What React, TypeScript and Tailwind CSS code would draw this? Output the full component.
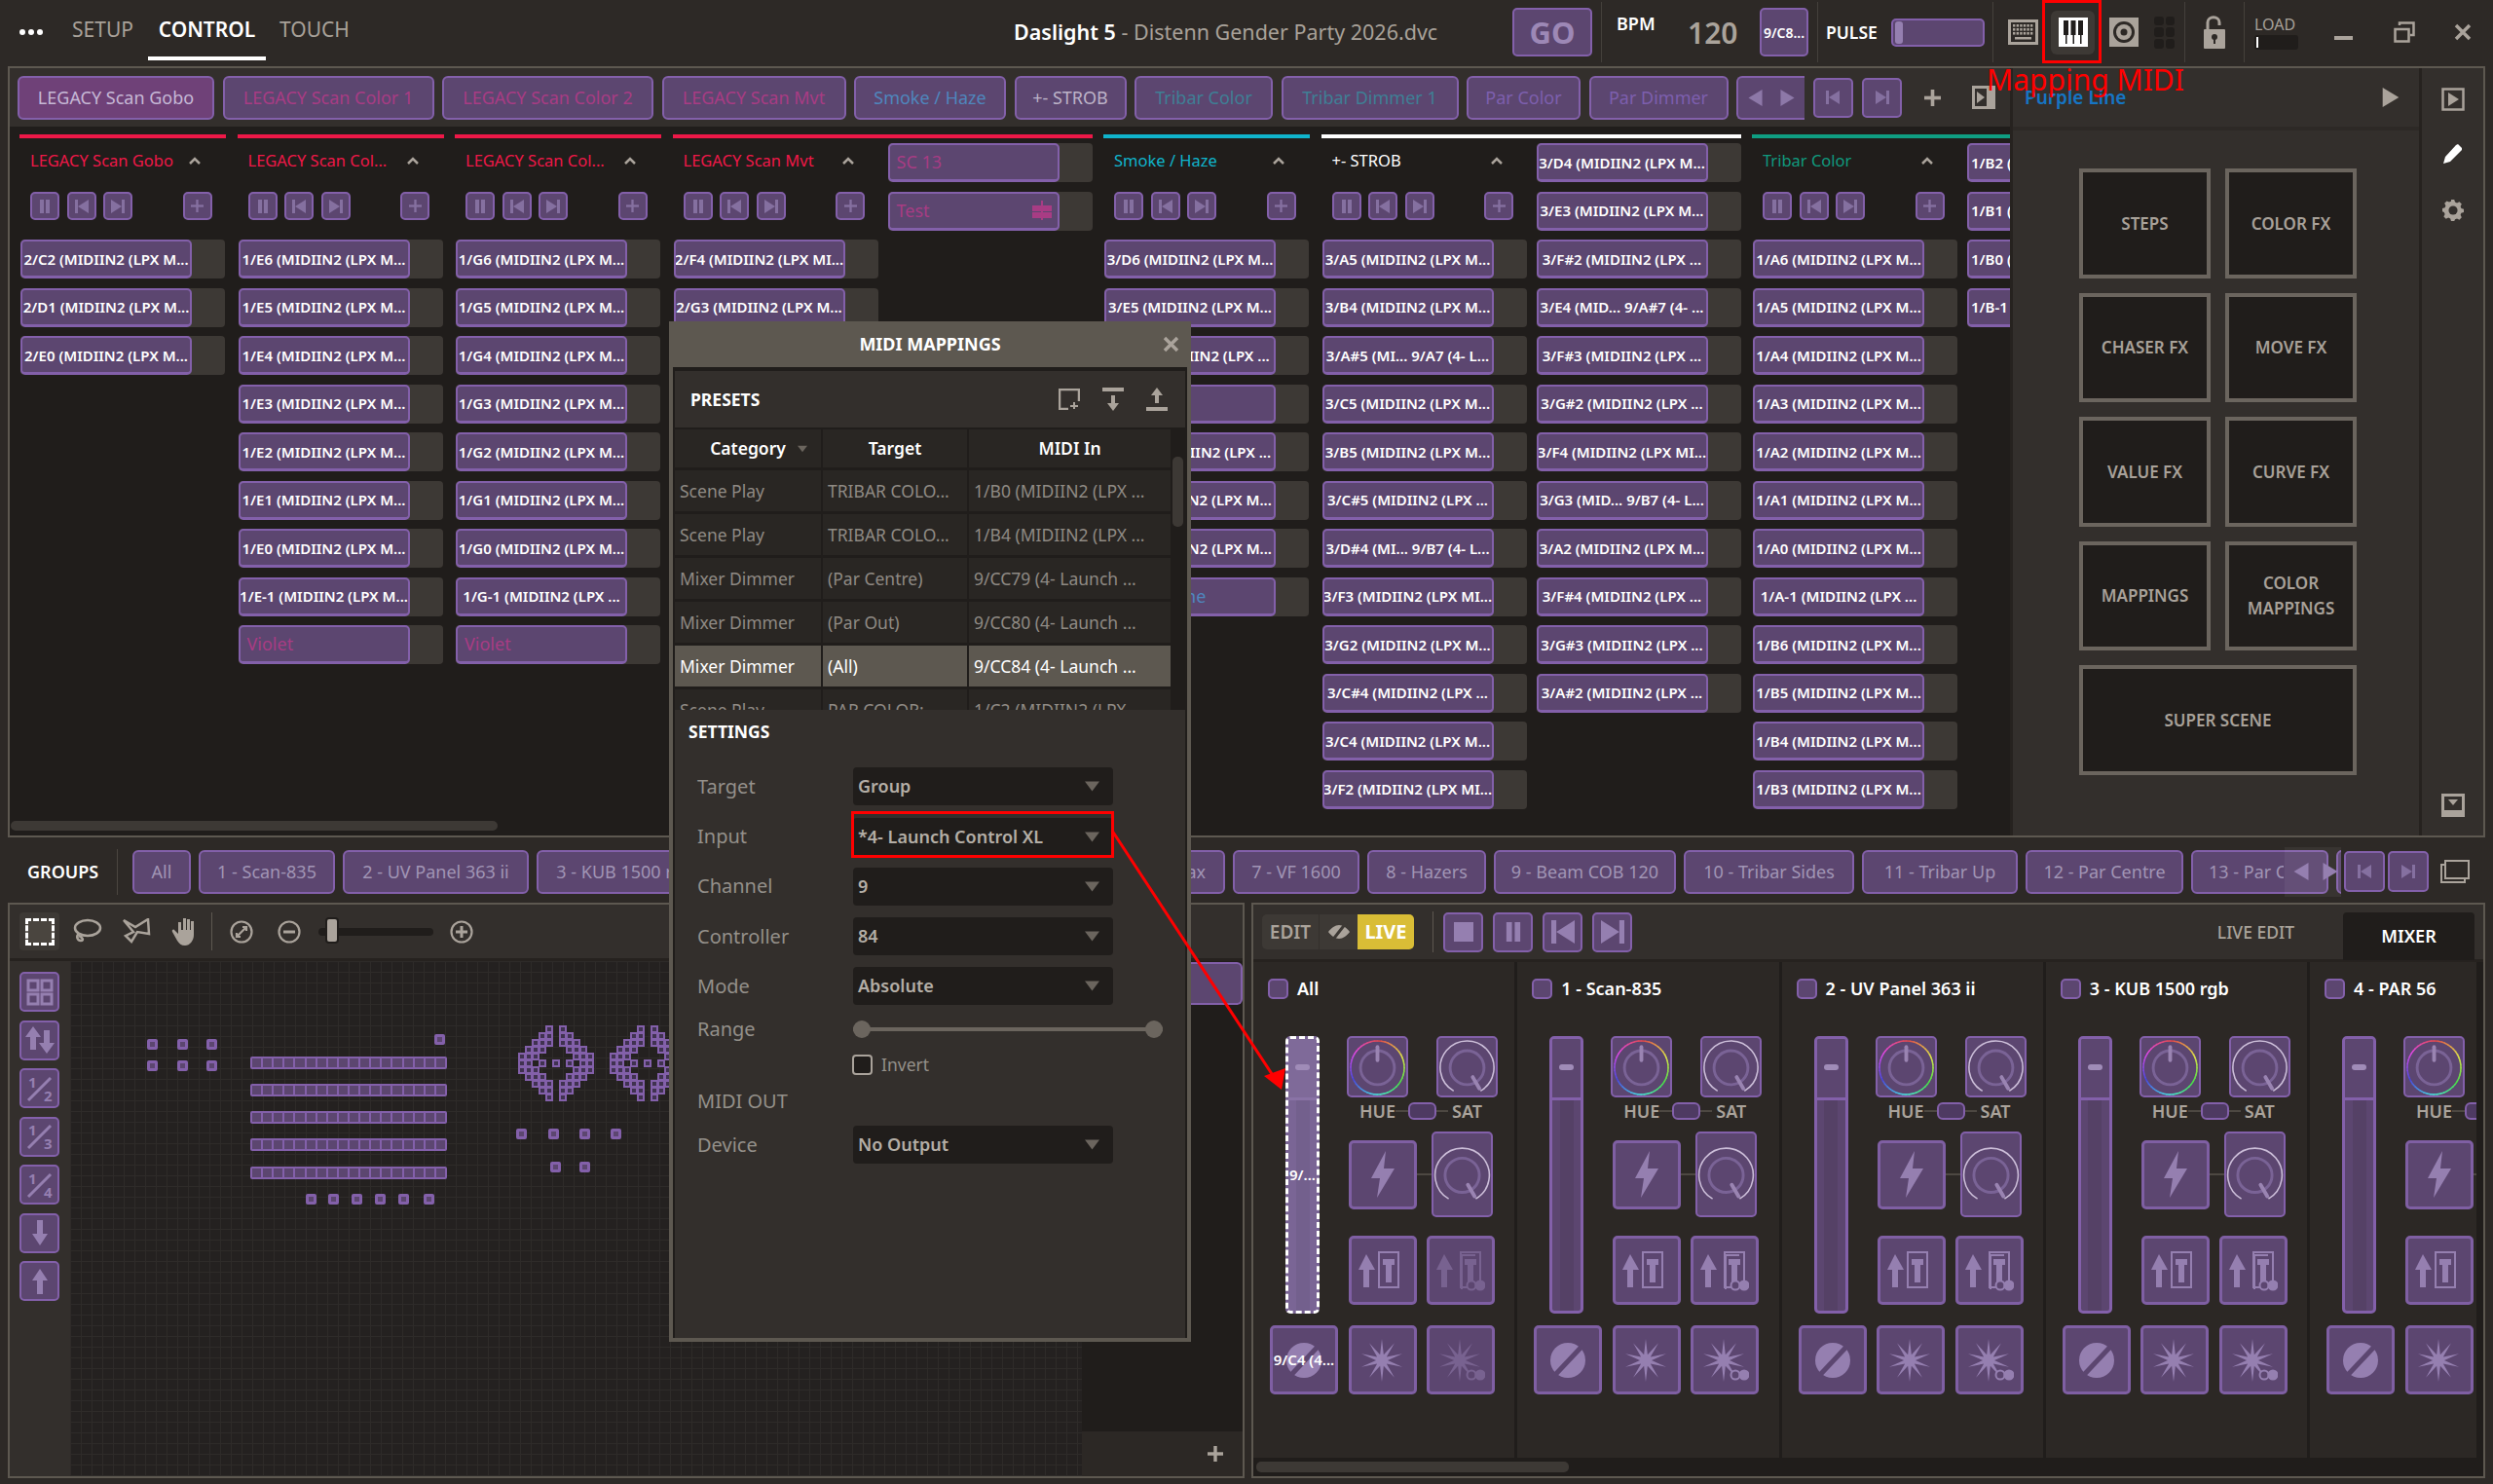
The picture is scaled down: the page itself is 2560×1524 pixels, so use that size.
import React from "react";

const BTN = "border-2 border-[#8360aa] bg-[#5c4670] rounded-[5px]";
const IC = "#957fb0";

function Tri({ dir, c = IC, s = 12 }: { dir: "l" | "r" | "d" | "u"; c?: string; s?: number }) {
  const p = { l: "10,0 10,12 0,6", r: "0,0 10,6 0,12", d: "0,0 12,0 6,8", u: "0,8 12,8 6,0" }[dir];
  return (
    <svg width={s} height={s} viewBox={dir === "d" || dir === "u" ? "0 0 12 8" : "0 0 10 12"}>
      <polygon points={p} fill={c} />
    </svg>
  );
}

function PauseI({ s = 14, c = IC }: { s?: number; c?: string }) {
  return (
    <svg width={s} height={s} viewBox="0 0 14 14">
      <rect x="2" y="0" width="4" height="14" fill={c} />
      <rect x="8" y="0" width="4" height="14" fill={c} />
    </svg>
  );
}
function PrevI({ s = 14, c = IC }: { s?: number; c?: string }) {
  return (
    <svg width={s} height={s} viewBox="0 0 14 14">
      <rect x="0" y="0" width="3" height="14" fill={c} />
      <polygon points="14,0 14,14 3,7" fill={c} />
    </svg>
  );
}
function NextI({ s = 14, c = IC }: { s?: number; c?: string }) {
  return (
    <svg width={s} height={s} viewBox="0 0 14 14">
      <rect x="11" y="0" width="3" height="14" fill={c} />
      <polygon points="0,0 0,14 11,7" fill={c} />
    </svg>
  );
}
function PlusI({ s = 14, c = IC, w = 3 }: { s?: number; c?: string; w?: number }) {
  return (
    <svg width={s} height={s} viewBox="0 0 14 14">
      <rect x={7 - w / 2} y="0" width={w} height="14" fill={c} />
      <rect x="0" y={7 - w / 2} width="14" height={w} fill={c} />
    </svg>
  );
}

const MAP = "(MIDIIN2 (LPX M...";

type R = { t: string; c?: string; n?: boolean; icon?: boolean };
const m = (t: string) => ({ t });
function list(pre: string, arr: string[], tail = MAP): R[] {
  return arr.map((a) => m(`${pre}${a} ${tail}`));
}

function Row({ r, clip }: { r: R; clip?: boolean }) {
  const text = r.n ? "justify-start pl-[7px] text-[18px] font-normal" : "justify-center pt-[1px] text-[15px] font-semibold";
  return (
    <div className="h-[40px] w-[210px] shrink-0 rounded-[4px] bg-[#3d3935]">
      <div
        className={`flex h-full w-[176px] items-center overflow-hidden whitespace-nowrap rounded-[5px] border-2 border-b-[3px] border-[#8360aa] bg-[#5c4670] ${text} ${clip ? "justify-start pl-[2px]" : ""}`}
        style={{ color: r.c || "#ffffff" }}
      >
        {r.t}
        {r.icon && (
          <svg className="ml-auto mr-[6px]" width="20" height="20" viewBox="0 0 20 20" fill={PINK}>
            <rect x="0" y="5" width="9" height="6" />
            <rect x="11" y="5" width="9" height="6" />
            <rect x="0" y="12" width="9" height="6" />
            <rect x="11" y="12" width="9" height="6" />
            <rect x="9" y="0" width="2" height="20" />
          </svg>
        )}
      </div>
    </div>
  );
}

function Rows({ rows, clip }: { rows: R[]; clip?: boolean }) {
  return (
    <div className="flex flex-col gap-[9.5px]">
      {rows.map((r, i) => (
        <Row key={i} r={r} clip={clip} />
      ))}
    </div>
  );
}

function SmallBtn({ children, ml }: { children: React.ReactNode; ml?: string }) {
  return <div className={`flex h-[29px] w-[30px] items-center justify-center ${BTN} ${ml || ""}`}>{children}</div>;
}

function Head({ title, color }: { title: string; color: string }) {
  return (
    <div className="h-[99px] w-[210px] shrink-0">
      <div className="flex h-[36px] items-center justify-between pl-[10px] pr-[24px]">
        <span className="w-[158px] overflow-hidden whitespace-nowrap text-[16.5px] font-normal" style={{ color }}>
          {title}
        </span>
        <svg width="14" height="10" viewBox="0 0 14 10">
          <polyline points="2,8 7,3 12,8" fill="none" stroke="#aaa39b" strokeWidth="2.5" />
        </svg>
      </div>
      <div className="mt-[14px] flex gap-[7.5px] pl-[10px]">
        <SmallBtn>
          <PauseI c="#8570a0" />
        </SmallBtn>
        <SmallBtn>
          <PrevI c="#8570a0" />
        </SmallBtn>
        <SmallBtn>
          <NextI c="#8570a0" />
        </SmallBtn>
        <SmallBtn ml="ml-[44px]">
          <PlusI s={13} w={2.5} c="#8570a0" />
        </SmallBtn>
      </div>
    </div>
  );
}

function Group({
  title,
  strip,
  color,
  rows,
  second,
  clip,
}: {
  title: string;
  strip: string;
  color?: string;
  rows: R[];
  second?: R[];
  clip?: boolean;
}) {
  return (
    <div className={`shrink-0 ${second ? "w-[431px]" : "w-[212px]"}`}>
      <div className="h-[4px]" style={{ background: strip }} />
      <div className="mt-[5px] flex gap-[10px] pl-[1px]">
        <div className="w-[210px]">
          <Head title={title} color={color || strip} />
          <Rows rows={rows} />
        </div>
        {second && <Rows rows={second} clip={clip} />}
      </div>
    </div>
  );
}

const RED = "#ee1848";
const PINK = "#a83c84";

function SceneTab({ w, t, c, active }: { w: string; t: string; c: string; active?: boolean }) {
  return (
    <div
      className={`flex h-[45px] shrink-0 items-center justify-center whitespace-nowrap rounded-[6px] border-2 border-[#8360aa] text-[18px] ${w} ${active ? "bg-[#6f4178]" : "bg-[#5c4670]"}`}
      style={{ color: c }}
    >
      {t}
    </div>
  );
}

function ScenesPanel() {
  return (
    <div className="flex w-[2054px] shrink-0 flex-col overflow-hidden">
      <div className="flex h-[60px] items-center gap-[8.5px] bg-[#332f2c] pl-[8px]">
        <SceneTab w="w-[202px]" t="LEGACY Scan Gobo" c="#c6b8d6" active />
        <SceneTab w="w-[217px]" t="LEGACY Scan Color 1" c={PINK} />
        <SceneTab w="w-[217px]" t="LEGACY Scan Color 2" c={PINK} />
        <SceneTab w="w-[189px]" t="LEGACY Scan Mvt" c={PINK} />
        <SceneTab w="w-[156px]" t="Smoke / Haze" c="#4f86bd" />
        <SceneTab w="w-[115px]" t="+- STROB" c="#bdb3c8" />
        <SceneTab w="w-[142px]" t="Tribar Color" c="#3f7f95" />
        <SceneTab w="w-[182px]" t="Tribar Dimmer 1" c="#3f7f95" />
        <SceneTab w="w-[117px]" t="Par Color" c="#7d5fae" />
        <SceneTab w="w-[143px]" t="Par Dimmer" c="#7d5fae" />
        <div className="flex h-[45px] w-[70px] shrink-0 items-center justify-center gap-[16px] rounded-l-[6px] border-y-2 border-l-2 border-[#8360aa] bg-[#5c4670]">
          <Tri dir="l" s={17} c="#8d78a8" />
          <Tri dir="r" s={17} c="#8d78a8" />
        </div>
        <div className={`flex h-[41px] w-[41px] shrink-0 items-center justify-center ${BTN}`}>
          <PrevI c="#8570a0" />
        </div>
        <div className={`ml-[1px] flex h-[41px] w-[41px] shrink-0 items-center justify-center ${BTN}`}>
          <NextI c="#8570a0" />
        </div>
        <div className="ml-[14px] shrink-0">
          <PlusI s={17} c="#aaa39b" />
        </div>
        <div className="ml-[24px] flex shrink-0">
          <svg width="24" height="24" viewBox="0 0 24 24">
            <rect x="1.5" y="1.5" width="21" height="21" fill="none" stroke="#aaa39b" strokeWidth="3" />
            <rect x="15" y="1" width="8" height="22" fill="#aaa39b" />
            <polygon points="5,6 13,12 5,18" fill="#aaa39b" />
          </svg>
        </div>
      </div>
      <div className="flex flex-1 gap-[11.5px] overflow-hidden bg-[#201d1b] pl-[10px] pt-[8px]">
        <Group title="LEGACY Scan Gobo" strip={RED} rows={list("2/", ["C2", "D1", "E0"])} />
        <Group
          title="LEGACY Scan Col..."
          strip={RED}
          rows={[
            ...list("1/", ["E6", "E5", "E4", "E3", "E2", "E1", "E0"]),
            m("1/E-1 (MIDIIN2 (LPX M..."),
            { t: "Violet", c: PINK, n: true },
          ]}
        />
        <Group
          title="LEGACY Scan Col..."
          strip={RED}
          rows={[
            ...list("1/", ["G6", "G5", "G4", "G3", "G2", "G1", "G0"]),
            m("1/G-1 (MIDIIN2 (LPX ..."),
            { t: "Violet", c: PINK, n: true },
          ]}
        />
        <Group
          title="LEGACY Scan Mvt"
          strip={RED}
          rows={[m("2/F4 (MIDIIN2 (LPX MI..."), m("2/G3 (MIDIIN2 (LPX M...")]}
          second={[
            { t: "SC 13", c: PINK, n: true },
            { t: "Test", c: PINK, n: true, icon: true },
          ]}
        />
        <Group
          title="Smoke / Haze"
          strip="#10b4cc"
          rows={[
            m("3/D6 (MIDIIN2 (LPX M..."),
            m("3/E5 (MIDIIN2 (LPX M..."),
            m("3/F#5 (MIDIIN2 (LPX ..."),
            { t: "", n: true },
            m("3/G#4 (MIDIIN2 (LPX ..."),
            m("3/F5 (MIDIIN2 (LPX M..."),
            m("3/E6 (MIDIIN2 (LPX M..."),
            { t: "Purple Line", c: "#4f86bd", n: true },
          ]}
        />
        <Group
          title="+- STROB"
          strip="#ffffff"
          rows={[
            m("3/A5 (MIDIIN2 (LPX M..."),
            m("3/B4 (MIDIIN2 (LPX M..."),
            m("3/A#5 (MI... 9/A7 (4- L..."),
            m("3/C5 (MIDIIN2 (LPX M..."),
            m("3/B5 (MIDIIN2 (LPX M..."),
            m("3/C#5 (MIDIIN2 (LPX ..."),
            m("3/D#4 (MI... 9/B7 (4- L..."),
            m("3/F3 (MIDIIN2 (LPX MI..."),
            m("3/G2 (MIDIIN2 (LPX M..."),
            m("3/C#4 (MIDIIN2 (LPX ..."),
            m("3/C4 (MIDIIN2 (LPX M..."),
            m("3/F2 (MIDIIN2 (LPX MI..."),
          ]}
          second={[
            m("3/D4 (MIDIIN2 (LPX M..."),
            m("3/E3 (MIDIIN2 (LPX M..."),
            m("3/F#2 (MIDIIN2 (LPX ..."),
            m("3/E4 (MID... 9/A#7 (4- ..."),
            m("3/F#3 (MIDIIN2 (LPX ..."),
            m("3/G#2 (MIDIIN2 (LPX ..."),
            m("3/F4 (MIDIIN2 (LPX MI..."),
            m("3/G3 (MID... 9/B7 (4- L..."),
            m("3/A2 (MIDIIN2 (LPX M..."),
            m("3/F#4 (MIDIIN2 (LPX ..."),
            m("3/G#3 (MIDIIN2 (LPX ..."),
            m("3/A#2 (MIDIIN2 (LPX ..."),
          ]}
        />
        <Group
          title="Tribar Color"
          strip="#0f9e82"
          color="#109a7e"
          rows={[
            ...list("1/", ["A6", "A5", "A4", "A3", "A2", "A1", "A0"]),
            m("1/A-1 (MIDIIN2 (LPX ..."),
            ...list("1/", ["B6", "B5", "B4", "B3"]),
          ]}
          second={[
            m("1/B2 (MIDIIN2"),
            m("1/B1 (MIDIIN2"),
            m("1/B0 (MIDIIN2"),
            m("1/B-1 (MIDIIN2"),
          ]}
          clip
        />
      </div>
      <div className="flex h-[15px] shrink-0 items-start bg-[#201d1b] pl-[1px]">
        <div className="h-[10px] w-[500px] rounded-[5px] bg-[#3d3935]" />
      </div>
    </div>
  );
}

function FxCard({ t, wide }: { t: string; wide?: boolean }) {
  return (
    <div
      className={`flex h-[112.5px] items-center justify-center whitespace-pre-line border-[4px] border-[#6b655e] bg-[#201d1b] pt-[1px] text-center text-[17px] font-semibold leading-[26px] text-[#a8a199] ${wide ? "col-span-2" : ""}`}
    >
      {t}
    </div>
  );
}

function Preview() {
  return (
    <div className="flex w-[420px] shrink-0 flex-col border-l-[3px] border-[#26221f]">
      <div className="flex h-[60px] shrink-0 items-center justify-between bg-[#332f2c] pl-[12px] pr-[19px]">
        <span className="text-[19px] font-semibold text-[#1675c4]">Purple Line</span>
        <Tri dir="r" s={20} c="#aaa39b" />
      </div>
      <div className="mt-[4px] flex-1 bg-[#332f2c] pl-[68px] pt-[39px]">
        <div className="grid w-[285px] grid-cols-[135px_135px] gap-x-[15px] gap-y-[15px]">
          <FxCard t="STEPS" />
          <FxCard t="COLOR FX" />
          <FxCard t="CHASER FX" />
          <FxCard t="MOVE FX" />
          <FxCard t="VALUE FX" />
          <FxCard t="CURVE FX" />
          <FxCard t="MAPPINGS" />
          <FxCard t={"COLOR\nMAPPINGS"} />
          <FxCard t="SUPER SCENE" wide />
        </div>
      </div>
    </div>
  );
}

function SideIcons() {
  return (
    <div className="flex flex-1 flex-col items-center border-l-[3px] border-[#26221f] bg-[#332f2c] pb-[19px] pt-[20px]">
      <svg width="24" height="24" viewBox="0 0 24 24">
        <rect x="1.5" y="1.5" width="21" height="21" fill="none" stroke="#aaa39b" strokeWidth="2.5" />
        <polygon points="7,5 18,12 7,19" fill="#aaa39b" />
      </svg>
      <svg className="mt-[34px]" width="20" height="20" viewBox="0 0 20 20">
        <polygon points="0,20 2,13 13,1 15,0 19,4 19,6 7,18" fill="#ffffff" />
      </svg>
      <svg className="mt-[37px]" width="22" height="22" viewBox="0 0 24 24">
        <path
          fill="#aaa39b"
          d="M10 0h4l1 3.2 2.4 1 3-1.5 2.9 2.9-1.5 3 1 2.4 3.2 1v4l-3.2 1-1 2.4 1.5 3-2.9 2.9-3-1.5-2.4 1L14 27h-4l-1-3.2-2.4-1-3 1.5-2.9-2.9 1.5-3-1-2.4L-1 15v-4l3.2-1 1-2.4-1.5-3 2.9-2.9 3 1.5 2.4-1z"
          transform="scale(.89) translate(1 0)"
        />
        <circle cx="12" cy="12" r="5" fill="#332f2c" />
      </svg>
      <svg className="mt-auto" width="24" height="24" viewBox="0 0 24 24">
        <rect x="0" y="0" width="24" height="24" fill="#aaa39b" />
        <rect x="3" y="3" width="18" height="14" fill="#332f2c" />
        <polygon points="7,6 17,6 12,12" fill="#aaa39b" />
      </svg>
    </div>
  );
}

function GroupTab({ t, w, right, clipped }: { t: string; w: string; right?: boolean; clipped?: boolean }) {
  return (
    <div
      className={`flex h-[45px] shrink-0 items-center overflow-hidden whitespace-nowrap rounded-[6px] border-2 border-[#8360aa] bg-[#5c4670] text-[18px] text-[#a195b5] ${w} ${right ? "justify-end pr-[18px]" : clipped ? "justify-start pl-[16px]" : "justify-center"}`}
    >
      {clipped ? <span className="w-[77px] overflow-hidden">{t}</span> : t}
    </div>
  );
}

function GroupsRow() {
  return (
    <div className="flex h-[67px] shrink-0 items-center pt-[3px]">
      <span className="ml-[28px] w-[74px] whitespace-nowrap text-[18px] font-semibold text-white">GROUPS</span>
      <div className="ml-[18px] h-[47px] w-px bg-[#4b4640]" />
      <div className="ml-[15px] flex w-[2268px] shrink-0 items-center gap-[8px] overflow-hidden">
        <GroupTab t="All" w="w-[60px]" />
        <GroupTab t="1 - Scan-835" w="w-[140px]" />
        <GroupTab t="2 - UV Panel 363 ii" w="w-[191px]" />
        <GroupTab t="3 - KUB 1500 rgb" w="w-[182px]" />
        <GroupTab t="4 - PAR 56" w="w-[130px]" />
        <GroupTab t="5 - Mini Mover" w="w-[160px]" />
        <GroupTab t="6 - Par Max" w="w-[211px]" right />
        <GroupTab t="7 - VF 1600" w="w-[130px]" />
        <GroupTab t="8 - Hazers" w="w-[122px]" />
        <GroupTab t="9 - Beam COB 120" w="w-[187px]" />
        <GroupTab t="10 - Tribar Sides" w="w-[175px]" />
        <GroupTab t="11 - Tribar Up" w="w-[160px]" />
        <GroupTab t="12 - Par Centre" w="w-[162px]" />
        <GroupTab t="13 - Par Centre" w="w-[141px]" clipped />
        <GroupTab t="" w="w-[60px]" />
      </div>
      <div className="z-10 -ml-[58px] flex h-[51px] w-[58px] shrink-0 items-center gap-[12px] bg-white/5 pl-[8px]">
        <Tri dir="l" s={18} c="#957fb0" />
        <Tri dir="r" s={18} c="#957fb0" />
      </div>
      <div className={`ml-[3px] flex h-[42px] w-[42px] shrink-0 items-center justify-center ${BTN}`}>
        <PrevI c="#8570a0" />
      </div>
      <div className={`ml-[3px] flex h-[42px] w-[42px] shrink-0 items-center justify-center ${BTN}`}>
        <NextI c="#8570a0" />
      </div>
      <svg className="ml-[12px]" width="30" height="24" viewBox="0 0 30 24">
        <rect x="1" y="5" width="24" height="18" fill="none" stroke="#aaa39b" strokeWidth="2" />
        <rect x="5" y="1" width="24" height="18" fill="#2d2926" stroke="#aaa39b" strokeWidth="2" />
      </svg>
    </div>
  );
}

function Dot({ x, y, s = 11 }: { x: number; y: number; s?: number }) {
  return (
    <div
      className="absolute rounded-[2px] border-[3px] border-[#8360aa] bg-[#5c4670]"
      style={{ left: x - s / 2, top: y - s / 2, width: s, height: s }}
    />
  );
}

const DIAMOND = [
  "....X.X....",
  "...XX.XX...",
  "..XXX.XXX..",
  ".XXX...XXX.",
  "XXX.....XXX",
  "XX.X.X.X.XX",
  "XXX.....XXX",
  ".XXX...XXX.",
  "..XXX.XXX..",
  "...XX.XX...",
  "....X.X....",
];

function Diamond({ x, y }: { x: number; y: number }) {
  const cells: React.ReactNode[] = [];
  DIAMOND.forEach((row, r) =>
    row.split("").forEach((c, i) => {
      if (c === "X")
        cells.push(
          <div
            key={`${r}-${i}`}
            className="absolute h-[8px] w-[8px] border-2 border-[#8360aa] bg-[#403250]"
            style={{ left: x + i * 7, top: y + r * 7 }}
          />,
        );
    }),
  );
  return <>{cells}</>;
}

function Bar({ y }: { y: number }) {
  return (
    <div
      className="absolute left-[185px] flex h-[13px] w-[202px] gap-[2px] rounded-[2px] bg-[#8360aa] p-[2px]"
      style={{ top: y - 6.5 }}
    >
      {Array.from({ length: 18 }).map((_, i) => (
        <div key={i} className="flex-1 bg-[#5c4670]" />
      ))}
    </div>
  );
}

function SideBtn({ children }: { children: React.ReactNode }) {
  return <div className={`flex h-[41px] w-[41px] items-center justify-center ${BTN}`}>{children}</div>;
}

function Frac({ d }: { d: string }) {
  return (
    <svg width="30" height="30" viewBox="0 0 30 30">
      <text x="3" y="14" fontSize="15" fontWeight="700" fontFamily="Noto Sans" fill={IC}>
        1
      </text>
      <line x1="3" y1="27" x2="26" y2="4" stroke={IC} strokeWidth="3" />
      <text x="19" y="28" fontSize="15" fontWeight="700" fontFamily="Noto Sans" fill={IC}>
        {d}
      </text>
    </svg>
  );
}

function CanvasPanel() {
  return (
    <div className="flex h-[591px] w-[1270px] shrink-0 flex-col border-2 border-[#5d5850]">
      <div className="flex h-[58px] shrink-0 items-center border-b-[3px] border-[#26221f] bg-[#332f2c] pl-[10px]">
        <div className="flex h-[39px] w-[41px] items-center justify-center rounded-[4px] bg-[#3d3935]">
          <div className="h-[28px] w-[30px] border-[3px] border-dashed border-white bg-[#4a453f]" />
        </div>
        <svg className="ml-[14px]" width="30" height="28" viewBox="0 0 30 28" fill="none" stroke="#aaa39b" strokeWidth="2.5">
          <ellipse cx="15" cy="10" rx="13" ry="8" />
          <path d="M6 16c-3 2-2 7 2 7s1-4-2-5" />
        </svg>
        <svg className="ml-[20px]" width="30" height="28" viewBox="0 0 30 28" fill="none" stroke="#aaa39b" strokeWidth="2.5">
          <path d="M2 2 L14 9 L27 1 L28 16 L16 14 L10 24 L4 18 L12 14 Z" />
        </svg>
        <svg className="ml-[21px]" width="28" height="30" viewBox="0 0 28 30">
          <path
            fill="#aaa39b"
            d="M12 1h3v12h1V2h3v11h1V4h3v14c0 6-4 11-9 11-4 0-6-2-8-5L1 15c-1-2 1-3 2-2l4 4V5h3v8h2z"
          />
        </svg>
        <div className="ml-[13px] h-[39px] w-px bg-[#5d5850]" />
        <svg className="ml-[18px]" width="24" height="24" viewBox="0 0 24 24" fill="none" stroke="#aaa39b" strokeWidth="2.2">
          <circle cx="12" cy="12" r="10.5" />
          <path d="M7 17l10-10M13 7h4v4M7 13v4h4" />
        </svg>
        <svg className="ml-[25px]" width="24" height="24" viewBox="0 0 24 24" fill="none" stroke="#aaa39b" strokeWidth="2.2">
          <circle cx="12" cy="12" r="10.5" />
          <path d="M6 12h12" strokeWidth="3" />
        </svg>
        <div className="relative ml-[18px] h-[8px] w-[118px] rounded-[4px] bg-[#201d1b]">
          <div className="absolute left-[7px] top-[-11px] h-[27px] w-[14px] rounded-[4px] border-2 border-[#201d1b] bg-[#aaa39b]" />
        </div>
        <svg className="ml-[17px]" width="24" height="24" viewBox="0 0 24 24" fill="none" stroke="#aaa39b" strokeWidth="2.2">
          <circle cx="12" cy="12" r="10.5" />
          <path d="M6 12h12M12 6v12" strokeWidth="3" />
        </svg>
      </div>
      <div className="flex flex-1 overflow-hidden">
        <div className="flex w-[62px] shrink-0 flex-col gap-[8.5px] bg-[#332f2c] pl-[10px] pt-[11px]">
          <SideBtn>
            <svg width="28" height="28" viewBox="0 0 28 28" fill="none" stroke={IC} strokeWidth="3">
              <rect x="2" y="2" width="10" height="10" />
              <rect x="16" y="2" width="10" height="10" />
              <rect x="2" y="16" width="10" height="10" />
              <rect x="16" y="16" width="10" height="10" />
            </svg>
          </SideBtn>
          <SideBtn>
            <svg width="30" height="28" viewBox="0 0 30 28" fill={IC}>
              <polygon points="8,0 16,11 11,11 11,24 5,24 5,11 0,11" />
              <polygon points="22,28 14,17 19,17 19,4 25,4 25,17 30,17" />
            </svg>
          </SideBtn>
          <SideBtn>
            <Frac d="2" />
          </SideBtn>
          <SideBtn>
            <Frac d="3" />
          </SideBtn>
          <SideBtn>
            <Frac d="4" />
          </SideBtn>
          <SideBtn>
            <svg width="16" height="26" viewBox="0 0 16 26" fill={IC}>
              <polygon points="5,0 11,0 11,14 16,14 8,26 0,14 5,14" />
            </svg>
          </SideBtn>
          <SideBtn>
            <svg width="16" height="26" viewBox="0 0 16 26" fill={IC}>
              <polygon points="5,26 11,26 11,12 16,12 8,0 0,12 5,12" />
            </svg>
          </SideBtn>
        </div>
        <div className="relative w-[1039px] shrink-0 overflow-hidden bg-[#242120] bg-[linear-gradient(#2e2b29_1px,transparent_1px),linear-gradient(90deg,#2e2b29_1px,transparent_1px)] bg-[size:11px_11px]">
          {[84, 115, 145].map((x) => (
            <React.Fragment key={x}>
              <Dot x={x} y={85} />
              <Dot x={x} y={107} />
            </React.Fragment>
          ))}
          <Dot x={379} y={80} />
          {[104, 132, 160, 188, 217].map((y) => (
            <Bar key={y} y={y} />
          ))}
          {[247, 270, 294, 318, 342, 368].map((x) => (
            <Dot key={x} x={x} y={244} />
          ))}
          <Diamond x={460} y={66} />
          <Diamond x={554} y={66} />
          {[463, 496, 528, 560].map((x) => (
            <Dot key={x} x={x} y={177} />
          ))}
          {[498, 528].map((x) => (
            <Dot key={x} x={x} y={211} />
          ))}
        </div>
        <div className="flex flex-1 flex-col bg-[#201d1b]">
          <div className="mt-[1px] h-[44px] rounded-r-[6px] border-2 border-l-0 border-[#8360aa] bg-[#5c4670]" />
          <div className="mt-auto flex h-[46px] items-center justify-end bg-[#2c2825] pr-[20px]">
            <PlusI s={16} c="#aaa39b" />
          </div>
        </div>
      </div>
    </div>
  );
}

function Knob({ h = 63, kind }: { h?: number; kind: "hue" | "sat" }) {
  const cy = h / 2;
  const cx = 30;
  const segs = Array.from({ length: 48 }).map((_, i) => {
    const a0 = (i / 48) * 2 * Math.PI - Math.PI / 2;
    const a1 = ((i + 1.2) / 48) * 2 * Math.PI - Math.PI / 2;
    return (
      <line
        key={i}
        x1={cx + 28.5 * Math.cos(a0)}
        y1={cy + 28.5 * Math.sin(a0)}
        x2={cx + 28.5 * Math.cos(a1)}
        y2={cy + 28.5 * Math.sin(a1)}
        stroke={`hsl(${(i / 48) * 360} 70% 58%)`}
        strokeWidth="1.6"
      />
    );
  });
  const R0 = 28.5;
  const sx = (d: number) => cx + R0 * Math.sin((d * Math.PI) / 180);
  const sy = (d: number) => cy - R0 * Math.cos((d * Math.PI) / 180);
  return (
    <div className={`overflow-hidden ${BTN}`} style={{ width: 63, height: h }}>
      <svg width="59" height={h - 4} viewBox={`0 0 60 ${h - 2}`} fill="none">
        <circle cx={cx} cy={cy} r="18" stroke="#7a6396" strokeWidth="3" />
        {kind === "hue" ? (
          <>
            {segs}
            <line x1={cx} y1={cy - 22} x2={cx} y2={cy - 8} stroke="#9a84b2" strokeWidth="4" strokeLinecap="round" />
          </>
        ) : (
          <>
            <path
              d={`M${sx(-150)} ${sy(-150)} A${R0} ${R0} 0 1 1 ${sx(150)} ${sy(150)}`}
              stroke="#cbbdd8"
              strokeWidth="1.6"
            />
            <line x1={cx + 6} y1={cy + 10} x2={cx + 13} y2={cy + 22} stroke="#9a84b2" strokeWidth="4" strokeLinecap="round" />
          </>
        )}
      </svg>
    </div>
  );
}

function LinkBadge() {
  return (
    <g>
      <circle cx="36" cy="38" r="4.5" fill="#5c4670" stroke={IC} strokeWidth="2" />
      <circle cx="45" cy="38" r="5.5" fill={IC} />
    </g>
  );
}

function BigBtn({ children, dim }: { children: React.ReactNode; dim?: boolean }) {
  return (
    <div
      className={`flex h-[71px] w-[70px] items-center justify-center rounded-[5px] border-[3px] border-[#7f5fa3] bg-[#5c4670] ${dim ? "[&>*]:opacity-50" : ""}`}
    >
      {children}
    </div>
  );
}

function FaderI({ link }: { link?: boolean }) {
  return (
    <svg width="50" height="46" viewBox="0 0 50 46">
      <polygon points="8,6 17,22 11,22 11,40 5,40 5,22 0,22" fill={IC} />
      {link ? <path d="M26 42V7h14" fill="none" stroke={IC} strokeWidth="2" /> : null}
      <rect x={link ? 25 : 21} y={4} width="20" height="36" fill="none" stroke={IC} strokeWidth="2" />
      <path d={link ? "M29 11h12v6h-3v21h-6V17h-3z" : "M25 11h12v6h-3v18h-6V17h-3z"} fill={IC} />
      {link && <LinkBadge />}
    </svg>
  );
}

function StarI({ link }: { link?: boolean }) {
  const pts = Array.from({ length: 20 })
    .map((_, i) => {
      const r = i % 2 === 0 ? 22 : 6;
      const a = (i / 20) * 2 * Math.PI - Math.PI / 2;
      return `${24 + r * Math.cos(a)},${23 + r * Math.sin(a)}`;
    })
    .join(" ");
  return (
    <svg width="50" height="46" viewBox="0 0 50 46">
      <polygon points={pts} fill={IC} />
      {link && <LinkBadge />}
    </svg>
  );
}

function Strip({ title, first }: { title: string; first?: boolean }) {
  return (
    <div className="flex h-full w-[271.25px] shrink-0 flex-col border-r-[3px] border-[#201d1b] bg-[#2c2825]">
      <div className="flex h-[38px] shrink-0 items-center pl-[15px] pt-[17px]">
        <div className={`h-[21px] w-[21px] ${BTN}`} />
        <span className="ml-[9px] whitespace-nowrap text-[18px] font-semibold leading-[21px] text-white">{title}</span>
      </div>
      <div className="mt-[38px] flex">
        <div
          className={`relative ml-[33px] h-[285px] w-[35px] shrink-0 overflow-hidden rounded-[5px] border-[3px] ${first ? "border-dashed border-white bg-[#7a6595]" : "border-[#8360aa] bg-[#5c4670]"}`}
        >
          <div className={`mx-auto h-full w-[14px] ${first ? "bg-[#73608d]" : "bg-[#554166]"}`} />
          <div
            className={`absolute left-0 top-0 flex h-[63px] w-full items-center justify-center border-b-[3px] pb-[3px] ${first ? "border-[#8a73a6] bg-[#7f6a99]" : "border-[#8360aa] bg-[#5c4670]"}`}
          >
            <div className="h-[6px] w-[15px] rounded-[3px] bg-[#a08cb8]" />
          </div>
          {first && (
            <span className="absolute left-0 top-[128px] w-full whitespace-nowrap text-center text-[15px] font-semibold text-white">9/...</span>
          )}
        </div>
        <div className="ml-[28px] flex w-[160px] shrink-0 flex-col">
          <div className="flex gap-[29px]">
            <Knob kind="hue" />
            <Knob kind="sat" />
          </div>
          <div className="mt-[5px] flex h-[18px] items-center">
            <span className="ml-[13px] w-[37px] text-[18px] font-semibold leading-[18px] text-[#aaa39b]">HUE</span>
            <div className="h-[2px] w-[13px] bg-[#4d4842]" />
            <div className="h-[18px] w-[29px] shrink-0 rounded-[6px] border-2 border-[#8360aa] bg-[#4e3a62]" />
            <div className="h-[2px] w-[12px] bg-[#4d4842]" />
            <span className="ml-[4px] text-[18px] font-semibold leading-[18px] text-[#aaa39b]">SAT</span>
          </div>
          <div className="ml-[2px] mt-[12px] flex h-[88px] items-center">
            <BigBtn>
              <svg width="24" height="48" viewBox="0 0 24 48">
                <polygon points="15,0 0,28 9,28 6,48 24,18 13,18" fill={IC} />
              </svg>
            </BigBtn>
            <div className="h-[2px] w-[15px] bg-[#4d4842]" />
            <Knob h={88} kind="sat" />
          </div>
          <div className="ml-[2px] mt-[19px] flex gap-[10px]">
            <BigBtn>
              <FaderI />
            </BigBtn>
            <BigBtn dim={first}>
              <FaderI link />
            </BigBtn>
          </div>
        </div>
      </div>
      <div className="ml-[17px] mt-[12px] flex gap-[10.5px]">
        <BigBtn>
          <div className="relative flex h-full w-full items-center justify-center">
            <svg width="40" height="40" viewBox="0 0 40 40">
              <circle cx="20" cy="20" r="18" fill={IC} />
              <line x1="4" y1="38" x2="36" y2="4" stroke="#5c4670" strokeWidth="5" />
            </svg>
            {first && (
              <span className="absolute left-0 right-0 whitespace-nowrap text-center text-[15px] font-semibold text-white">9/C4 (4...</span>
            )}
          </div>
        </BigBtn>
        <BigBtn>
          <StarI />
        </BigBtn>
        <BigBtn dim={first}>
          <StarI link />
        </BigBtn>
      </div>
    </div>
  );
}

function MixerPanel() {
  return (
    <div className="flex h-[591px] w-[1267px] shrink-0 flex-col border-2 border-[#5d5850] bg-[#201d1b]">
      <div className="flex h-[59px] shrink-0 items-center border-b-[3px] border-[#26221f] bg-[#332f2c] pl-[9px]">
        <div className="flex h-[36px] overflow-hidden rounded-[5px] bg-[#3d3935]">
          <span className="flex w-[58px] items-center justify-center text-[19px] font-semibold text-[#aaa39b]">EDIT</span>
          <span className="flex w-[40px] items-center justify-center border-l border-[#332f2c]">
            <svg width="24" height="18" viewBox="0 0 24 18" fill="#aaa39b">
              <path d="M1 9c3-4 7-7 11-7s8 3 11 7c-3 4-7 7-11 7S4 13 1 9z" />
              <line x1="5" y1="18" x2="19" y2="0" stroke="#3d3935" strokeWidth="3" />
            </svg>
          </span>
          <span className="flex w-[58px] items-center justify-center bg-[#d9bd36] text-[20px] font-bold text-white">LIVE</span>
        </div>
        <div className="ml-[19px] h-[42px] w-px bg-[#5d5850]" />
        <div className={`ml-[10px] flex h-[41px] w-[41px] items-center justify-center ${BTN}`}>
          <div className="h-[20px] w-[20px] bg-[#957fb0]" />
        </div>
        <div className={`ml-[10px] flex h-[41px] w-[41px] items-center justify-center ${BTN}`}>
          <PauseI s={20} />
        </div>
        <div className={`ml-[10px] flex h-[41px] w-[41px] items-center justify-center ${BTN}`}>
          <PrevI s={24} />
        </div>
        <div className={`ml-[10px] flex h-[41px] w-[41px] items-center justify-center ${BTN}`}>
          <NextI s={24} />
        </div>
        <span className="ml-auto text-[17.5px] font-medium text-[#aaa39b]">LIVE EDIT</span>
        <div className="ml-[50px] mr-[9px] mt-[9px] flex h-[49px] w-[135px] items-center justify-center rounded-t-[4px] bg-[#201d1b] text-[18px] font-semibold text-white">
          MIXER
        </div>
      </div>
      <div className="flex flex-1 overflow-hidden">
        <div className="flex w-[1256px] shrink-0 overflow-hidden">
          <Strip title="All" first />
          <Strip title="1 - Scan-835" />
          <Strip title="2 - UV Panel 363 ii" />
          <Strip title="3 - KUB 1500 rgb" />
          <Strip title="4 - PAR 56" />
        </div>
      </div>
      <div className="flex h-[19px] shrink-0 items-center bg-[#201d1b] pl-[3px]">
        <div className="h-[11px] w-[321px] rounded-[5px] bg-[#3d3935]" />
      </div>
    </div>
  );
}

function Select({ t }: { t: string }) {
  return (
    <div className="flex h-[39px] w-[267px] items-center justify-between rounded-[4px] bg-[#201d1b] pl-[5px] pr-[14px] text-[18px] font-semibold text-[#b4aea6]">
      {t}
      <Tri dir="d" s={15} c="#6b655e" />
    </div>
  );
}

function SetRow({ label, children, h = 39 }: { label: string; children?: React.ReactNode; h?: number }) {
  return (
    <div className="flex items-center" style={{ height: h }}>
      <span className="w-[183px] pl-[23px] text-[20px] text-[#94908a]">{label}</span>
      {children}
    </div>
  );
}

const TCOLS = "grid grid-cols-[150px_148px_207px] gap-x-[2px]";

function TRow({ a, b, c, sel }: { a: string; b: string; c: string; sel?: boolean }) {
  const cell = `flex items-center overflow-hidden whitespace-nowrap pl-[5px] text-[17.5px] ${sel ? "bg-[#5d5850] text-white" : "bg-[#292623] text-[#8f8a84]"}`;
  return (
    <div className={`${TCOLS} h-[42px] shrink-0`}>
      <div className={cell}>{a}</div>
      <div className={cell}>{b}</div>
      <div className={cell}>{c}</div>
    </div>
  );
}

function Dialog() {
  return (
    <div className="absolute left-[687px] top-[330px] flex h-[1048px] w-[536px] flex-col bg-[#5d5850] px-[4px] pb-[4px]">
      <div className="relative flex h-[47px] shrink-0 items-center justify-center text-[18px] font-bold text-white">
        MIDI MAPPINGS
        <svg className="absolute right-[8px]" width="17" height="17" viewBox="0 0 17 17">
          <path d="M2 2l13 13M15 2L2 15" stroke="#aaa39b" strokeWidth="3.5" />
        </svg>
      </div>
      <div className="flex flex-1 flex-col bg-[#201d1b] px-[2px] pt-[4px]">
        <div className="flex h-[58px] shrink-0 items-center justify-between bg-[#332f2c] pl-[16px] pr-[18px]">
          <span className="text-[17.5px] font-bold text-white">PRESETS</span>
          <div className="flex items-center gap-[23px]">
            <svg width="22" height="22" viewBox="0 0 22 22" fill="none" stroke="#aaa39b" strokeWidth="2.5">
              <path d="M10 21H1V1h20v12" />
              <path d="M16 14v7M12 18h8" strokeWidth="2" />
            </svg>
            <svg width="22" height="24" viewBox="0 0 22 24" fill="#aaa39b">
              <rect x="0" y="0" width="22" height="4" />
              <polygon points="9,8 13,8 13,16 17,16 11,24 5,16 9,16" />
            </svg>
            <svg width="22" height="24" viewBox="0 0 22 24" fill="#aaa39b">
              <rect x="0" y="20" width="22" height="4" />
              <polygon points="9,16 13,16 13,8 17,8 11,0 5,8 9,8" />
            </svg>
          </div>
        </div>
        <div className="relative flex h-[290px] shrink-0 flex-col gap-[3px] overflow-hidden pt-[2px]">
          <div className={`${TCOLS} h-[39px] shrink-0 text-[17.5px] font-semibold text-white`}>
            <div className="flex items-center justify-center gap-[12px] bg-[#292623] pl-[22px]">
              Category
              <Tri dir="d" s={10} c="#6b655e" />
            </div>
            <div className="flex items-center justify-center bg-[#292623]">Target</div>
            <div className="flex items-center justify-center bg-[#292623]">MIDI In</div>
          </div>
          <TRow a="Scene Play" b="TRIBAR COLO..." c="1/B0 (MIDIIN2 (LPX ..." />
          <TRow a="Scene Play" b="TRIBAR COLO..." c="1/B4 (MIDIIN2 (LPX ..." />
          <TRow a="Mixer Dimmer" b="(Par Centre)" c="9/CC79 (4- Launch ..." />
          <TRow a="Mixer Dimmer" b="(Par Out)" c="9/CC80 (4- Launch ..." />
          <TRow a="Mixer Dimmer" b="(All)" c="9/CC84 (4- Launch ..." sel />
          <TRow a="Scene Play" b="PAR COLOR:" c="1/C2 (MIDIIN2 (LPX ..." />
          <div className="absolute right-[2px] top-[30px] h-[72px] w-[11px] rounded-[5px] bg-[#3d3935]" />
        </div>
        <div className="flex-1 bg-[#332f2c]">
          <div className="pl-[14px] pt-[9px] text-[17.5px] font-bold text-white">SETTINGS</div>
          <div className="mt-[24px] flex flex-col gap-[12.3px]">
            <SetRow label="Target">
              <Select t="Group" />
            </SetRow>
            <SetRow label="Input">
              <Select t="*4- Launch Control XL" />
            </SetRow>
            <SetRow label="Channel">
              <Select t="9" />
            </SetRow>
            <SetRow label="Controller">
              <Select t="84" />
            </SetRow>
            <SetRow label="Mode">
              <Select t="Absolute" />
            </SetRow>
          </div>
          <SetRow label="Range" h={50}>
            <div className="relative h-[4px] w-[318px] bg-[#6b655e]">
              <div className="absolute left-0 top-[-7px] h-[18px] w-[18px] rounded-full bg-[#6b655e]" />
              <div className="absolute right-0 top-[-7px] h-[18px] w-[18px] rounded-full bg-[#6b655e]" />
            </div>
          </SetRow>
          <div className="flex h-[22px] items-center pl-[182px]">
            <div className="h-[21px] w-[21px] rounded-[4px] border-2 border-[#aaa39b] bg-[#201d1b]" />
            <span className="ml-[9px] text-[17.5px] text-[#94908a]">Invert</span>
          </div>
          <div className="mt-[15px] flex h-[24px] items-center pl-[23px] text-[20px] text-[#94908a]">MIDI OUT</div>
          <div className="mt-[13px]">
            <SetRow label="Device">
              <Select t="No Output" />
            </SetRow>
          </div>
        </div>
      </div>
    </div>
  );
}

function Sep({ ml }: { ml: string }) {
  return <div className={`h-[62px] w-px shrink-0 bg-[#44403b] ${ml}`} />;
}

function TopBar() {
  return (
    <div className="flex h-[68px] shrink-0 items-center pb-[2px]">
      <div className="ml-[20px] flex w-[24px] shrink-0 justify-between">
        <span className="h-[6px] w-[6px] rounded-full bg-white" />
        <span className="h-[6px] w-[6px] rounded-full bg-white" />
        <span className="h-[6px] w-[6px] rounded-full bg-white" />
      </div>
      <span className="ml-[30px] w-[78px] shrink-0 pb-[5px] text-[21px] text-[#a8a199]">SETUP</span>
      <div className="relative flex h-[68px] w-[121px] shrink-0 items-center justify-center self-start pb-[7px]">
        <span className="text-[21px] font-semibold text-white">CONTROL</span>
        <div className="absolute bottom-[6px] left-0 right-0 h-[4px] bg-white" />
      </div>
      <span className="ml-[14px] w-[78px] shrink-0 pb-[5px] text-[21px] text-[#a8a199]">TOUCH</span>
      <div className="w-[1188px] shrink-0 whitespace-nowrap pl-[676px] text-[21.5px]">
        <span className="font-semibold text-white">Daslight 5</span>
        <span className="text-[#a8a199]"> - Distenn Gender Party 2026.dvc</span>
      </div>
      <div className={`flex h-[50px] w-[82px] shrink-0 items-center justify-center text-[31px] font-bold text-[#9d88b6] ${BTN}`}>GO</div>
      <Sep ml="ml-[9px]" />
      <div className="ml-[15px] w-[73px] shrink-0 self-start pt-[11px] text-[18px] font-semibold text-white">BPM</div>
      <div className="w-[74px] shrink-0 text-[30px] font-semibold text-[#aaa39b]">120</div>
      <div className={`flex h-[50px] w-[50px] shrink-0 items-center justify-center overflow-hidden whitespace-nowrap text-[14px] font-semibold text-white ${BTN}`}>9/C8...</div>
      <Sep ml="ml-[9px]" />
      <div className="ml-[8px] w-[67px] shrink-0 text-[17.5px] font-semibold text-white">PULSE</div>
      <div className="relative h-[29px] w-[96px] shrink-0 rounded-[5px] border-2 border-[#8360aa] bg-[#5c4670]">
        <div className="absolute left-[2px] top-[1px] h-[23px] w-[8px] rounded-[3px] bg-[#957fb0]" />
      </div>
      <Sep ml="ml-[8px]" />
      <svg className="ml-[15px] shrink-0" width="31" height="26" viewBox="0 0 31 26">
        <rect x="0" y="0" width="31" height="26" fill="#aaa39b" />
        <rect x="3" y="3" width="25" height="20" fill="#2d2926" />
        <g fill="#aaa39b">
          {[0, 1, 2, 3, 4, 5].map((i) =>
            [0, 1, 2].map((j) => <rect key={`${i}${j}`} x={5 + i * 3.6} y={5 + j * 4} width="2.4" height="2.6" />),
          )}
          <rect x="7" y="18" width="17" height="2.5" />
        </g>
      </svg>
      <div className="ml-[13px] flex h-[45px] w-[45px] shrink-0 items-center justify-center rounded-[6px] bg-[#3d3935]">
        <svg width="30" height="30" viewBox="0 0 30 30">
          <rect x="0" y="0" width="30" height="30" fill="#ffffff" />
          <rect x="5" y="3" width="5" height="15" fill="#201d1b" />
          <rect x="12.5" y="3" width="5" height="15" fill="#201d1b" />
          <rect x="20" y="3" width="5" height="15" fill="#201d1b" />
          <rect x="7" y="18" width="1.5" height="9" fill="#201d1b" />
          <rect x="14.5" y="18" width="1.5" height="9" fill="#201d1b" />
          <rect x="22" y="18" width="1.5" height="9" fill="#201d1b" />
        </svg>
      </div>
      <svg className="ml-[15px] shrink-0" width="30" height="30" viewBox="0 0 30 30">
        <rect x="0" y="0" width="30" height="30" fill="#aaa39b" />
        <circle cx="15" cy="15" r="11" fill="#2d2926" />
        <circle cx="15" cy="15" r="8" fill="#aaa39b" />
        <circle cx="15" cy="15" r="3.5" fill="#2d2926" />
      </svg>
      <div className="ml-[16px] grid h-[33px] w-[21px] shrink-0 grid-cols-2 gap-[2px]">
        {[0, 1, 2, 3, 4, 5].map((i) => (
          <div key={i} className="rounded-[3px] bg-[#201d1b]" />
        ))}
      </div>
      <Sep ml="ml-[10px]" />
      <svg className="ml-[19px] shrink-0" width="22" height="34" viewBox="0 0 22 34">
        <rect x="0" y="14" width="22" height="20" rx="1" fill="#aaa39b" />
        <path d="M4 14V7c0-7 12-7 12 0v3" fill="none" stroke="#aaa39b" strokeWidth="3" />
        <circle cx="11" cy="22" r="3" fill="#2d2926" />
        <rect x="10" y="23" width="2" height="6" fill="#2d2926" />
      </svg>
      <Sep ml="ml-[19px]" />
      <div className="ml-[10px] flex w-[46px] shrink-0 flex-col">
        <span className="text-[16px] leading-[18px] text-[#a8a199]">LOAD</span>
        <div className="mt-[2px] flex h-[15px] w-[45px] items-center rounded-[3px] bg-[#201d1b] pl-[2px]">
          <div className="h-[11px] w-[2px] bg-white" />
        </div>
      </div>
      <div className="ml-[36px] h-[4px] w-[19px] shrink-0 translate-y-[6px] bg-[#aaa39b]" />
      <svg className="ml-[42px] shrink-0" width="22" height="22" viewBox="0 0 22 22" fill="none" stroke="#aaa39b" strokeWidth="2.5">
        <rect x="1.5" y="8" width="14" height="12.5" />
        <path d="M6 4V1.5h14.5V14H17" />
      </svg>
      <svg className="ml-[40px] shrink-0" width="18" height="18" viewBox="0 0 18 18">
        <path d="M2 2l14 14M16 2L2 16" stroke="#aaa39b" strokeWidth="3.5" />
      </svg>
    </div>
  );
}

export default function App() {
  return (
    <div className="relative h-[1524px] w-[2560px] overflow-hidden bg-[#2d2926] font-['Noto_Sans',sans-serif]">
      <TopBar />
      <div className="ml-[8px] flex h-[792px] w-[2544px] border-2 border-[#5d5850]">
        <ScenesPanel />
        <Preview />
        <SideIcons />
      </div>
      <GroupsRow />
      <div className="ml-[8px] flex gap-[7px]">
        <CanvasPanel />
        <MixerPanel />
      </div>

      <Dialog />

      <div className="pointer-events-none absolute left-[2097px] top-0 h-[65px] w-[61px] border-[3px] border-[#ff0000]" />
      <div className="pointer-events-none absolute left-[2040px] top-[60px] text-[30px] leading-[44px] text-[#ff0000]">Mapping MIDI</div>
      <div className="pointer-events-none absolute left-[874px] top-[833px] h-[48px] w-[270px] border-[3px] border-[#ff0000]" />
      <svg className="pointer-events-none absolute left-0 top-0" width="2560" height="1524">
        <line x1="1142" y1="853" x2="1312" y2="1112" stroke="#ff0000" strokeWidth="3" />
        <polygon points="1316,1119 1298,1105 1320,1097" fill="#ff0000" />
      </svg>
    </div>
  );
}
